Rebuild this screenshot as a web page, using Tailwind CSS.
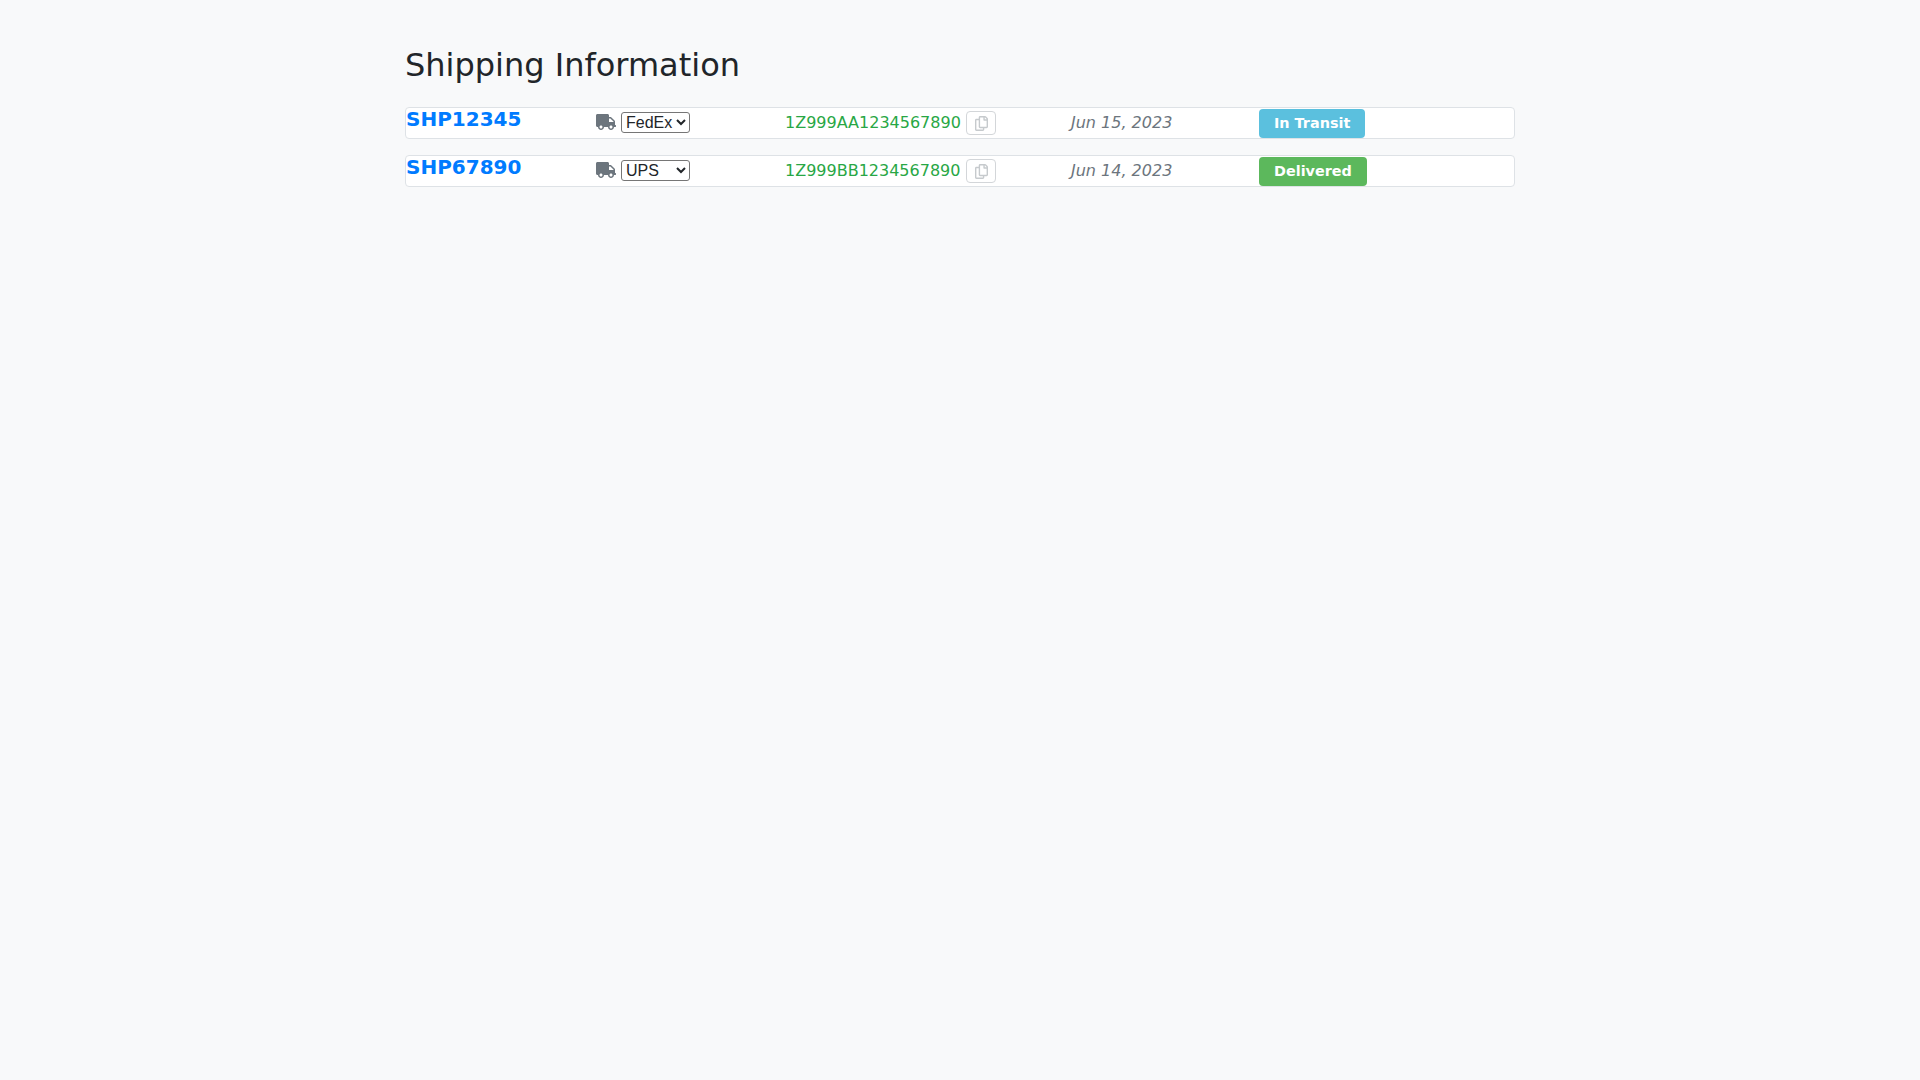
<!DOCTYPE html>
<html lang="en">
<head>
    <meta charset="UTF-8">
    <title>Shipping Information</title>
    <script src="https://cdn.jsdelivr.net/npm/@tailwindcss/browser@4"></script>
</head>
<body class="bg-[#f8f9fa] min-h-screen font-['DejaVu_Sans',sans-serif] text-[#212529]">
    <div class="w-[1110px] ml-[405px] pt-[46px]">
        <h2 class="text-[32px] leading-[38px] font-normal mb-[23px]">Shipping Information</h2>

        <!-- Shipment 1 -->
        <div class="flex bg-white border border-[#dee2e6] rounded-[4px] h-[32px] mb-[16px]">
            <div class="w-[190px] shrink-0">
                <a href="#" class="block text-[20px] leading-[22px] font-bold text-[#007bff]">SHP12345</a>
            </div>
            <div class="w-[189px] shrink-0 flex items-center gap-[5px] pb-[2px]">
                <svg class="w-[20px] h-[16px] fill-[#6c757d]" viewBox="0 0 640 512"><path d="M624 352h-16V243.9c0-12.7-5.1-24.9-14.1-33.9L494 110.1c-9-9-21.2-14.1-33.9-14.1H416V48c0-26.5-21.5-48-48-48H48C21.5 0 0 21.5 0 48v320c0 26.5 21.5 48 48 48h16c0 53 43 96 96 96s96-43 96-96h128c0 53 43 96 96 96s96-43 96-96h48c8.8 0 16-7.2 16-16v-32c0-8.8-7.2-16-16-16zM160 464c-26.5 0-48-21.5-48-48s21.5-48 48-48 48 21.5 48 48-21.5 48-48 48zm320 0c-26.5 0-48-21.5-48-48s21.5-48 48-48 48 21.5 48 48-21.5 48-48 48zm80-208H416V144h44.1l99.9 99.9V256z"/></svg>
                <select class="h-[21px] appearance-auto bg-white border border-[#767676] rounded-[3px] text-[16px] text-[#212529] font-['Liberation_Sans',sans-serif]">
                    <option>FedEx</option>
                    <option>UPS</option>
                </select>
            </div>
            <div class="w-[286px] shrink-0 flex items-center gap-[5px]">
                <span class="w-[176px] shrink-0 text-[16px] text-[#28a745]">1Z999AA1234567890</span>
                <button class="w-[30px] h-[24px] flex items-center justify-center border border-[#d3d6d9] rounded-[4px] bg-white">
                    <svg class="w-[13px] h-[15px] fill-[#c6cacd]" viewBox="0 0 448 512"><path d="M433.941 65.941l-51.882-51.882A48 48 0 0 0 348.118 0H176c-26.51 0-48 21.49-48 48v48H48c-26.51 0-48 21.49-48 48v320c0 26.51 21.49 48 48 48h224c26.51 0 48-21.49 48-48v-48h80c26.51 0 48-21.49 48-48V99.882a48 48 0 0 0-14.059-33.941zM266 464H54a6 6 0 0 1-6-6V150a6 6 0 0 1 6-6h74v224c0 26.51 21.49 48 48 48h96v42a6 6 0 0 1-6 6zm128-96H182a6 6 0 0 1-6-6V54a6 6 0 0 1 6-6h106v88c0 13.255 10.745 24 24 24h88v202a6 6 0 0 1-6 6zm6-256h-64V48h9.632c1.591 0 3.117.632 4.243 1.757l48.368 48.368a6 6 0 0 1 1.757 4.243V112z"/></svg>
                </button>
            </div>
            <div class="w-[188px] shrink-0 flex items-center">
                <span class="text-[16px] italic text-[#6c757d]">Jun 15, 2023</span>
            </div>
            <div class="flex items-center">
                <span class="h-[29px] px-[15px] flex items-center rounded-[4px] bg-[#5bc0de] text-white text-[14.4px] font-bold mt-[1px]">In Transit</span>
            </div>
        </div>

        <!-- Shipment 2 -->
        <div class="flex bg-white border border-[#dee2e6] rounded-[4px] h-[32px]">
            <div class="w-[190px] shrink-0">
                <a href="#" class="block text-[20px] leading-[22px] font-bold text-[#007bff]">SHP67890</a>
            </div>
            <div class="w-[189px] shrink-0 flex items-center gap-[5px] pb-[2px]">
                <svg class="w-[20px] h-[16px] fill-[#6c757d]" viewBox="0 0 640 512"><path d="M624 352h-16V243.9c0-12.7-5.1-24.9-14.1-33.9L494 110.1c-9-9-21.2-14.1-33.9-14.1H416V48c0-26.5-21.5-48-48-48H48C21.5 0 0 21.5 0 48v320c0 26.5 21.5 48 48 48h16c0 53 43 96 96 96s96-43 96-96h128c0 53 43 96 96 96s96-43 96-96h48c8.8 0 16-7.2 16-16v-32c0-8.8-7.2-16-16-16zM160 464c-26.5 0-48-21.5-48-48s21.5-48 48-48 48 21.5 48 48-21.5 48-48 48zm320 0c-26.5 0-48-21.5-48-48s21.5-48 48-48 48 21.5 48 48-21.5 48-48 48zm80-208H416V144h44.1l99.9 99.9V256z"/></svg>
                <select class="h-[21px] appearance-auto bg-white border border-[#767676] rounded-[3px] text-[16px] text-[#212529] font-['Liberation_Sans',sans-serif]">
                    <option>UPS</option>
                    <option>FedEx</option>
                </select>
            </div>
            <div class="w-[286px] shrink-0 flex items-center gap-[5px]">
                <span class="w-[176px] shrink-0 text-[16px] text-[#28a745]">1Z999BB1234567890</span>
                <button class="w-[30px] h-[24px] flex items-center justify-center border border-[#d3d6d9] rounded-[4px] bg-white">
                    <svg class="w-[13px] h-[15px] fill-[#c6cacd]" viewBox="0 0 448 512"><path d="M433.941 65.941l-51.882-51.882A48 48 0 0 0 348.118 0H176c-26.51 0-48 21.49-48 48v48H48c-26.51 0-48 21.49-48 48v320c0 26.51 21.49 48 48 48h224c26.51 0 48-21.49 48-48v-48h80c26.51 0 48-21.49 48-48V99.882a48 48 0 0 0-14.059-33.941zM266 464H54a6 6 0 0 1-6-6V150a6 6 0 0 1 6-6h74v224c0 26.51 21.49 48 48 48h96v42a6 6 0 0 1-6 6zm128-96H182a6 6 0 0 1-6-6V54a6 6 0 0 1 6-6h106v88c0 13.255 10.745 24 24 24h88v202a6 6 0 0 1-6 6zm6-256h-64V48h9.632c1.591 0 3.117.632 4.243 1.757l48.368 48.368a6 6 0 0 1 1.757 4.243V112z"/></svg>
                </button>
            </div>
            <div class="w-[188px] shrink-0 flex items-center">
                <span class="text-[16px] italic text-[#6c757d]">Jun 14, 2023</span>
            </div>
            <div class="flex items-center">
                <span class="h-[29px] px-[15px] flex items-center rounded-[4px] bg-[#5cb85c] text-white text-[14.4px] font-bold mt-[1px]">Delivered</span>
            </div>
        </div>
    </div>
</body>
</html>
